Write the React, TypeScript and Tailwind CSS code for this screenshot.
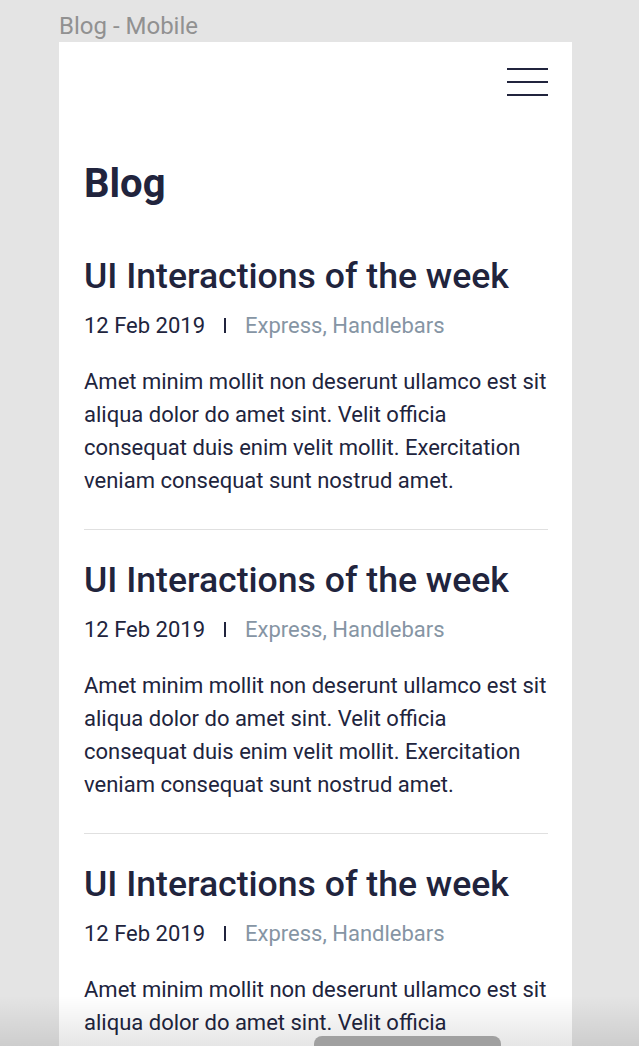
import React from "react";

const posts = [1, 2, 3];

const Post = ({ last }: { last?: boolean }) => (
  <article className={last ? "" : "border-b border-[#e0e0e0]"}>
    <h2 className="text-[35.6px] font-medium leading-[44px] text-[#21243d]">
      UI Interactions of the week
    </h2>
    <div className="mt-[14px] flex items-center text-[22px] leading-[28px]">
      <span className="text-[#21243d]">12 Feb 2019</span>
      <span className="mx-[19px] mb-[2px] h-[15px] w-[2px] bg-[#21243d]" />
      <span className="text-[#8695a4]">Express, Handlebars</span>
    </div>
    <p className="mt-[25px] pb-[32px] text-[22px] leading-[33px] text-[#21243d]">
      Amet minim mollit non deserunt ullamco est sit aliqua dolor do amet sint.
      Velit officia consequat duis enim velit mollit. Exercitation veniam
      consequat sunt nostrud amet.
    </p>
  </article>
);

export default function App() {
  return (
    <div className="relative h-[1046px] overflow-hidden bg-[#e4e4e4] font-['Roboto',sans-serif]">
      <div className="pl-[59px] pt-[12px] text-[24px] leading-[28px] text-[#919191]">
        Blog - Mobile
      </div>
      <div className="ml-[59px] mt-[2px] w-[513px] bg-white pl-[25px] pr-[24px]">
        <div className="flex justify-end pt-[26px]">
          <button className="flex w-[41px] flex-col gap-[11px]">
            <span className="h-[2px] w-full bg-[#21243d]" />
            <span className="h-[2px] w-full bg-[#21243d]" />
            <span className="h-[2px] w-full bg-[#21243d]" />
          </button>
        </div>
        <h1 className="mt-[64px] text-[40px] font-bold leading-[48px] text-[#21243d]">
          Blog
        </h1>
        <div className="mt-[46px] flex flex-col gap-[28px]">
          {posts.map((p, i) => (
            <Post key={p} last={i === posts.length - 1} />
          ))}
        </div>
      </div>
      <div className="pointer-events-none absolute inset-x-0 bottom-0 h-[50px] bg-gradient-to-b from-transparent to-black/10" />
      <div className="absolute bottom-[-10px] left-[314px] h-[20px] w-[187px] rounded-[8px] bg-[#a0a0a0]" />
    </div>
  );
}
